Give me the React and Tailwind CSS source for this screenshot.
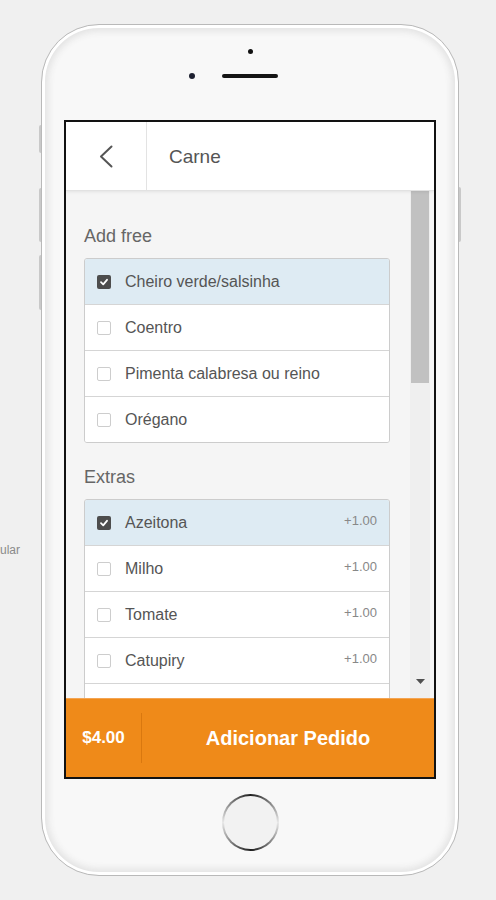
import React from "react";

const freeItems = [
  { name: "Cheiro verde/salsinha", checked: true },
  { name: "Coentro" },
  { name: "Pimenta calabresa ou reino" },
  { name: "Orégano" },
];

const extraItems = [
  { name: "Azeitona", price: "+1.00", checked: true },
  { name: "Milho", price: "+1.00" },
  { name: "Tomate", price: "+1.00" },
  { name: "Catupiry", price: "+1.00" },
  { name: "", price: "" },
];

function Checkbox({ checked }) {
  if (checked) {
    return (
      <span className="flex h-[14px] w-[14px] shrink-0 items-center justify-center rounded-[2px] bg-[#4d4d4d]">
        <svg width="10" height="10" viewBox="0 0 10 10" fill="none">
          <polyline points="2,5.2 4.2,7.3 8,2.8" stroke="#fff" strokeWidth="1.8" strokeLinecap="round" strokeLinejoin="round" />
        </svg>
      </span>
    );
  }
  return <span className="h-[14px] w-[14px] shrink-0 rounded-[2px] border border-[#cdcdcd] bg-white" />;
}

function Row({ item, first }) {
  return (
    <div
      className={
        "flex items-center pl-[12px] pr-[12px] " +
        (first ? "h-[45px] " : "h-[46px] border-t border-[#d5d5d5] ") +
        (item.checked ? "bg-[#deebf3]" : "bg-white")
      }
    >
      {item.name !== "" && <Checkbox checked={item.checked} />}
      <span className="ml-[14px] flex-1 text-[16px] leading-[20px] text-[#555]">{item.name}</span>
      {item.price && <span className="-mt-[3px] text-[13px] leading-[16px] text-[#888]">{item.price}</span>}
    </div>
  );
}

function Group({ items }) {
  return (
    <div className="overflow-hidden rounded-[3px] border border-[#cccccc]">
      {items.map((it, i) => (
        <Row key={i} item={it} first={i === 0} />
      ))}
    </div>
  );
}

export default function App() {
  return (
    <div className="flex h-[900px] overflow-hidden bg-[#f0f0f0] pt-[24px] font-['Liberation_Sans',Arial,sans-serif]">
      {/* label peeking from behind the phone */}
      <div className="flex w-[41px] shrink-0 justify-end overflow-hidden pr-[21px] pt-[518px]">
        <span className="whitespace-nowrap text-[12px] leading-[16px] text-[#8a8a8a]">Celular</span>
      </div>

      {/* phone */}
      <div className="relative flex h-[852px] w-[418px] shrink-0 flex-col rounded-[58px] border border-[#b9b9b9] bg-[#f8f8f8] px-[22px] shadow-[inset_0_0_0_3px_#ffffff,inset_0_0_7px_6px_#e2e2e2]">
        {/* side buttons */}
        <div className="absolute left-[-3px] top-[100px] h-[28px] w-[2px] rounded-l bg-[#c9c9c9]" />
        <div className="absolute left-[-3px] top-[163px] h-[54px] w-[2px] rounded-l bg-[#c9c9c9]" />
        <div className="absolute left-[-3px] top-[230px] h-[55px] w-[2px] rounded-l bg-[#c9c9c9]" />
        <div className="absolute right-[-3px] top-[162px] h-[55px] w-[2px] rounded-r bg-[#c9c9c9]" />

        {/* top: sensor, camera, speaker */}
        <div className="flex h-[95px] shrink-0 flex-col items-center">
          <div className="mt-[24px] h-[5px] w-[5px] rounded-full bg-[#111]" />
          <div className="mt-[19px] flex items-center">
            <div className="h-[6px] w-[6px] rounded-full bg-[#1d2030]" />
            <div className="ml-[27px] h-[4px] w-[56px] rounded-full bg-[#141414]" />
            <div className="ml-[27px] h-[6px] w-[6px]" />
          </div>
        </div>

        {/* screen */}
        <div className="flex h-[659px] shrink-0 flex-col overflow-hidden border-2 border-[#121212] bg-white">
          <div className="relative z-10 flex h-[69px] shrink-0 border-b border-[#e2e2e2] bg-white shadow-[0_1px_3px_rgba(0,0,0,0.08)]">
            <div className="flex w-[81px] items-center justify-center border-r border-[#e3e3e3]">
              <svg width="16" height="23" viewBox="0 0 16 23" fill="none">
                <polyline points="13.5,1.5 3,11.5 13.5,21.5" stroke="#555" strokeWidth="2" strokeLinecap="round" strokeLinejoin="round" />
              </svg>
            </div>
            <div className="flex items-center pl-[22px] pt-[3px] text-[19px] text-[#555]">Carne</div>
          </div>

          <div className="flex min-h-0 flex-1 overflow-hidden bg-[#f5f5f5]">
            <div className="flex-1 pl-[18px] pr-[20px] pt-[33px]">
              <div className="mb-[10px] text-[18px] leading-[24px] text-[#666]">Add free</div>
              <Group items={freeItems} />
              <div className="mb-[10px] mt-[22px] text-[18px] leading-[24px] text-[#666]">Extras</div>
              <Group items={extraItems} />
            </div>
            <div className="mr-[4px] flex w-[20px] flex-col bg-[#efefef]">
              <div className="mx-[1px] h-[192px] bg-[#c1c1c1]" />
              <div className="flex flex-1 items-end justify-center pb-[14px]">
                <svg width="9" height="5" viewBox="0 0 9 5">
                  <polygon points="0,0 9,0 4.5,5" fill="#505050" />
                </svg>
              </div>
            </div>
          </div>

          <div className="flex h-[79px] shrink-0 items-center border-t border-[#f4a452] bg-[#ef8a19] text-white">
            <div className="flex h-[50px] w-[76px] items-center justify-center border-r border-[#d9780f] text-[17px] font-bold">
              $4.00
            </div>
            <div className="flex flex-1 items-center justify-center text-[20px] font-bold">Adicionar Pedido</div>
          </div>
        </div>

        {/* home button */}
        <div className="flex flex-1 justify-center pt-[15px]">
          <div className="h-[57px] w-[57px] rounded-full bg-[conic-gradient(#1e1e1e,#e8e8e8_25%,#1e1e1e_50%,#e8e8e8_75%,#1e1e1e)] p-[2px]">
            <div className="h-full w-full rounded-full bg-[#f2f2f2]" />
          </div>
        </div>
      </div>
    </div>
  );
}
